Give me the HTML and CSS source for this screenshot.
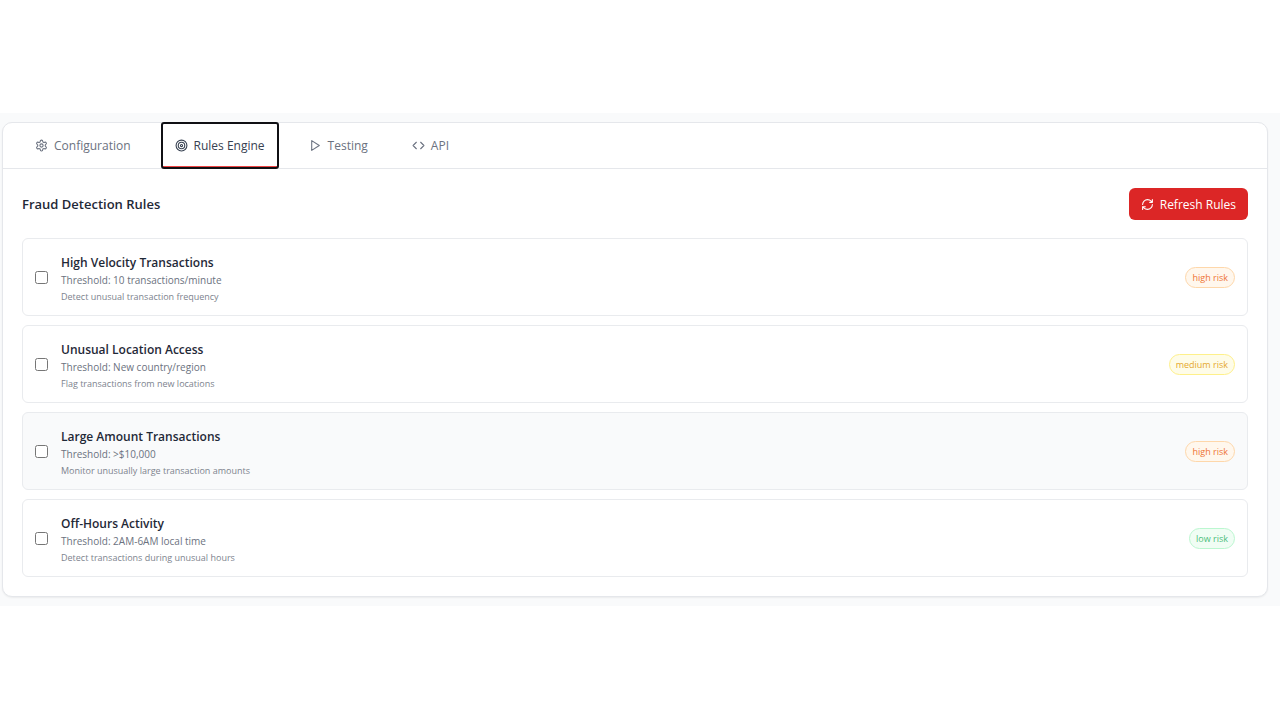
FILE: index.html
```html
<!DOCTYPE html>
<html lang="en">
  <head>
    <meta charset="UTF-8" />
    <meta name="viewport" content="width=device-width, initial-scale=1" />
    <title>Fraud Detection Rules</title>
    <link rel="stylesheet" href="styles.css">
  </head>
  <body>
    <main class="page">
      <div class="card">
        <nav class="tabs">
          <button type="button" class="tab">
            <svg class="icon" viewBox="0 0 24 24"><path d="M12.22 2h-.44a2 2 0 0 0-2 2v.18a2 2 0 0 1-1 1.73l-.43.25a2 2 0 0 1-2 0l-.15-.08a2 2 0 0 0-2.73.73l-.22.38a2 2 0 0 0 .73 2.73l.15.1a2 2 0 0 1 1 1.72v.51a2 2 0 0 1-1 1.74l-.15.09a2 2 0 0 0-.73 2.73l.22.38a2 2 0 0 0 2.73.73l.15-.08a2 2 0 0 1 2 0l.43.25a2 2 0 0 1 1 1.73V20a2 2 0 0 0 2 2h.44a2 2 0 0 0 2-2v-.18a2 2 0 0 1 1-1.73l.43-.25a2 2 0 0 1 2 0l.15.08a2 2 0 0 0 2.73-.73l.22-.39a2 2 0 0 0-.73-2.73l-.15-.08a2 2 0 0 1-1-1.74v-.5a2 2 0 0 1 1-1.74l.15-.09a2 2 0 0 0 .73-2.73l-.22-.38a2 2 0 0 0-2.73-.73l-.15.08a2 2 0 0 1-2 0l-.43-.25a2 2 0 0 1-1-1.73V4a2 2 0 0 0-2-2z" /><circle cx="12" cy="12" r="3" /></svg>
            Configuration
          </button>
          <button type="button" class="tab active">
            <svg class="icon" viewBox="0 0 24 24"><circle cx="12" cy="12" r="10" /><circle cx="12" cy="12" r="6" /><circle cx="12" cy="12" r="2" /></svg>
            Rules Engine
          </button>
          <button type="button" class="tab">
            <svg class="icon" viewBox="0 0 24 24"><path d="M5 3l14 9-14 9z" /></svg>
            Testing
          </button>
          <button type="button" class="tab">
            <svg class="icon" viewBox="0 0 24 24"><path d="M16 18l6-6-6-6M8 6l-6 6 6 6" /></svg>
            API
          </button>
        </nav>

        <section class="content">
          <div class="content-header">
            <h1>Fraud Detection Rules</h1>
            <button type="button" class="refresh">
              <svg class="icon" viewBox="0 0 24 24"><path d="M3 12a9 9 0 0 1 9-9 9.75 9.75 0 0 1 6.74 2.74L21 8M21 3v5h-5M21 12a9 9 0 0 1-9 9 9.75 9.75 0 0 1-6.74-2.74L3 16M8 16H3v5" /></svg>
              Refresh Rules
            </button>
          </div>

          <div class="rules">
            <div class="rule">
              <input type="checkbox" id="rule-velocity" />
              <div class="rule-info">
                <label for="rule-velocity">High Velocity Transactions</label>
                <p class="threshold">Threshold: 10 transactions/minute</p>
                <p class="description">Detect unusual transaction frequency</p>
              </div>
              <span class="badge high">high risk</span>
            </div>
            <div class="rule">
              <input type="checkbox" id="rule-location" />
              <div class="rule-info">
                <label for="rule-location">Unusual Location Access</label>
                <p class="threshold">Threshold: New country/region</p>
                <p class="description">Flag transactions from new locations</p>
              </div>
              <span class="badge medium">medium risk</span>
            </div>
            <div class="rule selected">
              <input type="checkbox" id="rule-amount" />
              <div class="rule-info">
                <label for="rule-amount">Large Amount Transactions</label>
                <p class="threshold">Threshold: &gt;$10,000</p>
                <p class="description">Monitor unusually large transaction amounts</p>
              </div>
              <span class="badge high">high risk</span>
            </div>
            <div class="rule">
              <input type="checkbox" id="rule-hours" />
              <div class="rule-info">
                <label for="rule-hours">Off-Hours Activity</label>
                <p class="threshold">Threshold: 2AM-6AM local time</p>
                <p class="description">Detect transactions during unusual hours</p>
              </div>
              <span class="badge low">low risk</span>
            </div>
          </div>
        </section>
      </div>
    </main>
  </body>
</html>
```

FILE: styles.css
```css
* {
  box-sizing: border-box;
}
body {
  margin: 0;
  min-height: 100vh;
  padding-top: 113px;
  background: #fff;
  color: #1f2937;
  font-family: "Segoe UI", "Open Sans", "Noto Sans", sans-serif;
}
h1,
p {
  margin: 0;
}
button {
  font: inherit;
  cursor: pointer;
}
.page {
  padding: 9px 12px 9px 2px;
  background: #f9fafb;
}
.card {
  background: #fff;
  border: 1px solid #e5e7eb;
  border-radius: 10px;
  box-shadow: 0 1px 2px rgba(0, 0, 0, 0.06);
}
.icon {
  width: 13px;
  height: 13px;
  flex: none;
  fill: none;
  stroke: currentColor;
  stroke-width: 2;
  stroke-linecap: round;
  stroke-linejoin: round;
}
.tabs {
  display: flex;
  gap: 18px;
  padding: 0 19px;
  border-bottom: 1px solid #e5e7eb;
}
.tab {
  display: flex;
  align-items: center;
  gap: 6px;
  height: 45px;
  padding: 1px 13px 0;
  border: none;
  border-bottom: 2px solid transparent;
  background: none;
  color: #6b7280;
  font-size: 12px;
}
.tab.active {
  border-bottom-color: #ef4444;
  border-radius: 2px;
  outline: 2px solid #101014;
  outline-offset: -1px;
  color: #374151;
}
.content {
  padding: 19px;
}
.content-header {
  display: flex;
  justify-content: space-between;
  align-items: center;
  margin-bottom: 18px;
}
h1 {
  font-size: 13px;
  font-weight: 600;
}
.refresh {
  display: flex;
  align-items: center;
  gap: 6px;
  height: 32px;
  padding: 0 12px;
  border: none;
  border-radius: 6px;
  background: #dc2626;
  color: #fff;
  font-size: 12px;
}
.rules {
  display: flex;
  flex-direction: column;
  gap: 9px;
}
.rule {
  display: flex;
  align-items: center;
  gap: 13px;
  padding: 13px 12px 12px;
  border: 1px solid #e9ebee;
  border-radius: 6px;
}
.rule.selected {
  background: #f9fafb;
}
.rule input {
  width: 13px;
  height: 13px;
  margin: 0;
}
.rule-info {
  flex: 1;
}
.rule-info label {
  display: block;
  font-size: 12px;
  font-weight: 600;
  line-height: 21px;
}
.threshold {
  color: #6b7280;
  font-size: 10px;
  line-height: 14px;
}
.description {
  margin-top: 4px;
  color: #7d838e;
  font-size: 9px;
  line-height: 12px;
}
.badge {
  padding: 3px 6px;
  border: 1px solid;
  border-radius: 11px;
  font-size: 9px;
  line-height: 13px;
}
.badge.high {
  border-color: #fed7aa;
  background: #fff7ed;
  color: #ee7436;
}
.badge.medium {
  border-color: #fef08a;
  background: #fefce8;
  color: #e5a82e;
}
.badge.low {
  border-color: #bbf7d0;
  background: #f0fdf4;
  color: #4dbd7c;
}
```
